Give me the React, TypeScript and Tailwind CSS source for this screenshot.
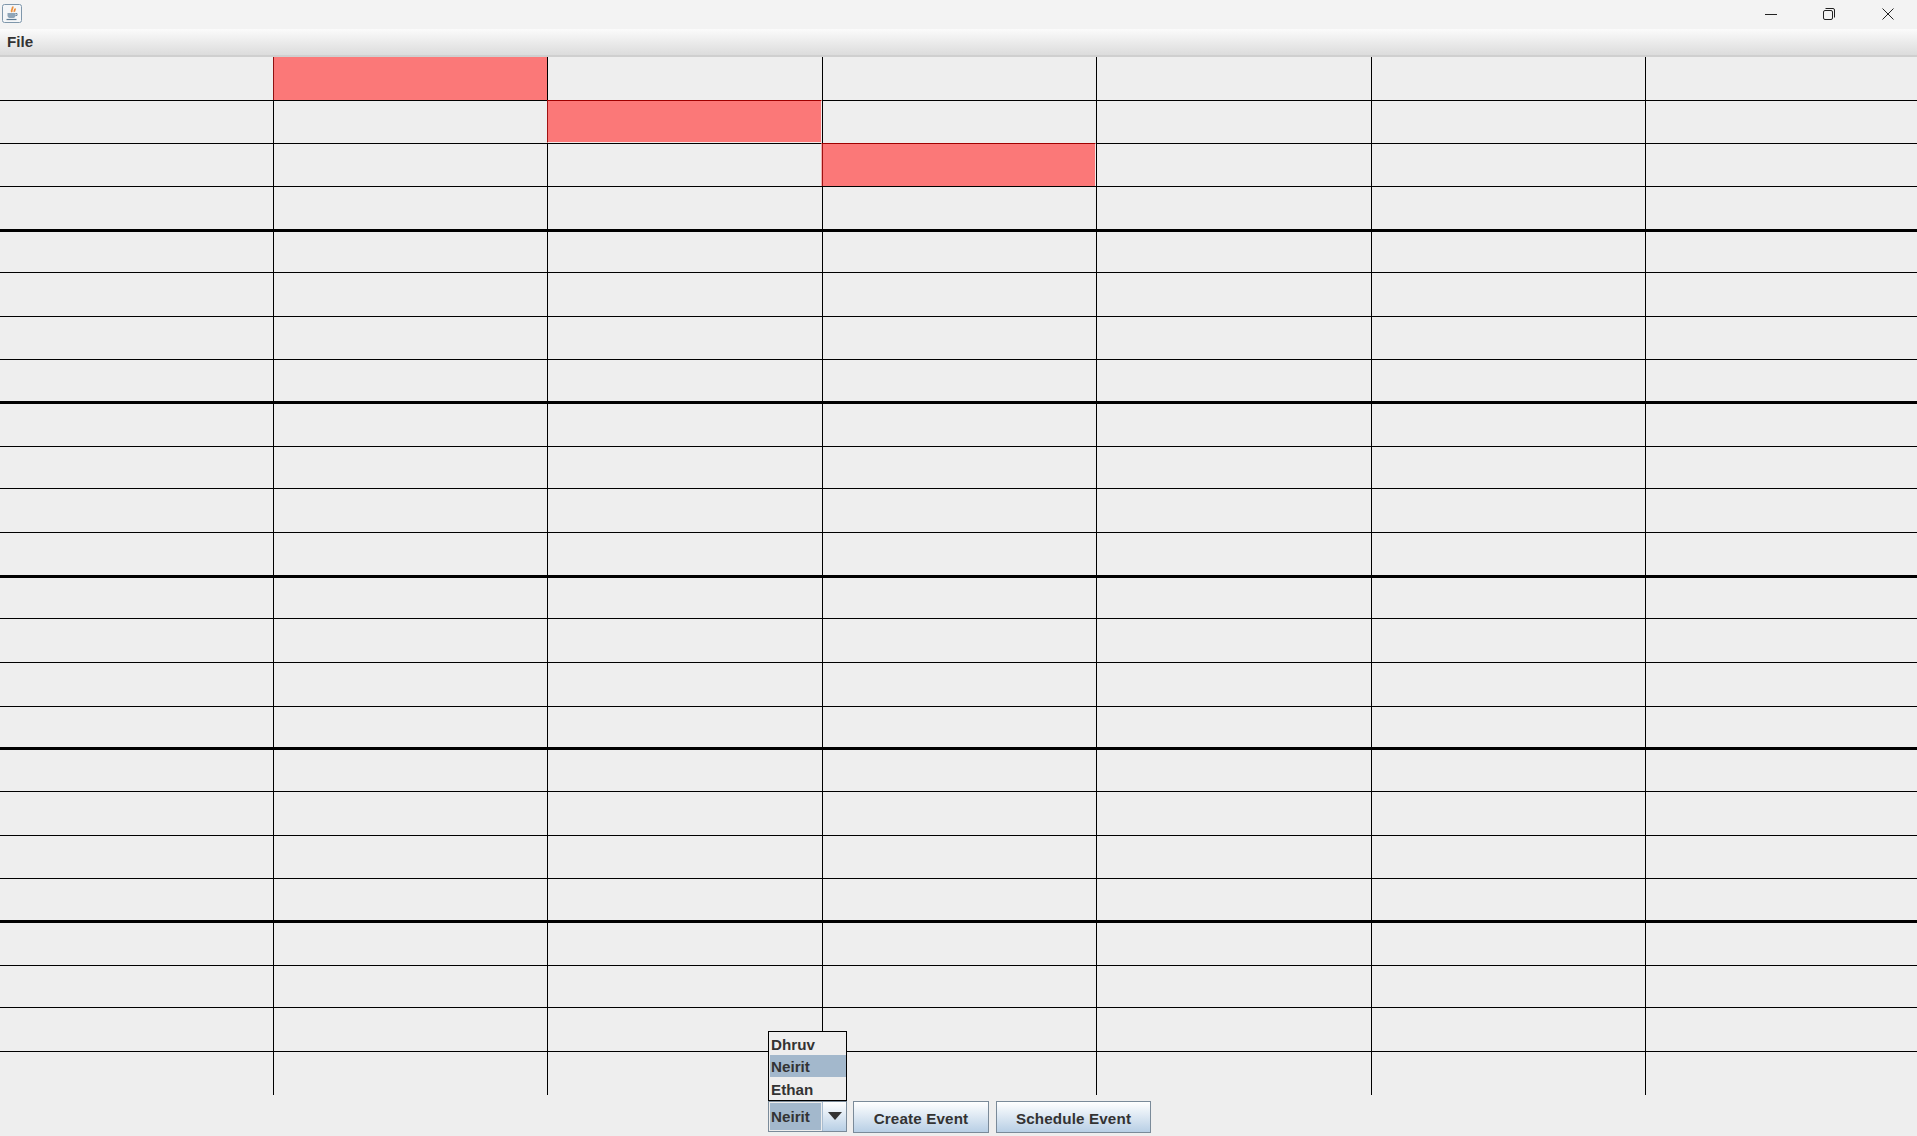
import React from 'react';

const font = "font-['Liberation_Sans',Arial,sans-serif]";
const rowCount = 24;
const colCount = 7;

// overlay for the filled slots, they paint over the grid lines on their left and top
const filled: Record<string, string> = {
  '0-1': 'absolute -left-px top-0 right-0 bottom-0 border-l border-l-[#8f1010] bg-[#fb7878]',
  '1-2': 'absolute -left-px -top-px right-0 bottom-0 border-l border-t border-l-[#a01010] border-t-[#a00000] border-r border-b border-r-[#f3eaea] border-b-[#f3eaea] bg-[#fb7878]',
  '2-3': 'absolute -left-[2px] -top-px right-0 bottom-0 border-l border-t border-r border-l-[#f0b0b0] border-t-[#a00000] border-r-[#f3eaea] bg-[#fb7878] shadow-[inset_1px_0_0_#a01010]',
};

const JavaIcon = () => (
  <svg width="20" height="20" viewBox="0 0 20 20" className="shrink-0">
    <rect x="0.5" y="0.5" width="19" height="18" rx="2" fill="#f4f6f8" stroke="#7f97ab" />
    <path d="M10.5 2.500c1.200 1.800-2 3-.5 5.500M13 4.500c.5 1.200-1.200 1.800-.5 3.300" stroke="#ec8f3c" strokeWidth="1.800" fill="none" />
    <path d="M5.500 9h8v2.500c0 1.500-1 2.500-2 2.500h-4c-1 0-2-1-2-2.500z" fill="#8fa5b8" />
    <path d="M13.500 9.500h1.500v2h-1.500" stroke="#6f8aa0" fill="none" />
    <path d="M4.500 15.500h10" stroke="#5c7a92" strokeWidth="1.200" />
  </svg>
);

const TitleBar = () => (
  <div className="flex h-[29px] items-center justify-between bg-[#f3f3f3] pl-[2px]">
    <div className="-mt-[2px]">
      <JavaIcon />
    </div>
    <div className="-mt-[2px] flex">
      <div className="flex w-[58.67px] justify-center pl-px">
        <svg width="12" height="12" viewBox="0 0 12 12">
          <path d="M0 6.500h12" stroke="#222" />
        </svg>
      </div>
      <div className="flex w-[58.67px] justify-center">
        <svg width="12" height="12" viewBox="0 0 12 12" fill="none">
          <rect x="0.500" y="2.500" width="9" height="9" rx="1.500" stroke="#222" />
          <path d="M2.500 .500h7.500a1.500 1.500 0 0 1 1.500 1.500v7.500" stroke="#222" />
        </svg>
      </div>
      <div className="flex w-[58.67px] justify-center">
        <svg width="12" height="12" viewBox="0 0 12 12">
          <path d="M.5.500l11 11M11.500.500l-11 11" stroke="#222" />
        </svg>
      </div>
    </div>
  </div>
);

const MenuBar = () => (
  <div className="flex h-[28px] items-center border-b-2 border-b-[#cfcfcf] bg-gradient-to-b from-[#fbfbfb] to-[#dcdcdc] pl-[7px]">
    <span className="text-[15.2px] font-bold text-[#333333]">File</span>
  </div>
);

const ScheduleGrid = () => (
  <div className="grid grid-cols-[274px_274px_275px_274px_275px_274px_271px] grid-rows-[44px_43px_43px_45px_41px_44px_43px_44px_43px_42px_44px_45px_41px_44px_44px_43px_42px_44px_43px_44px_43px_42px_44px_43px]">
    {Array.from({ length: rowCount }).map((_, row) =>
      Array.from({ length: colCount }).map((_, col) => {
        const thick = row % 4 === 3 && row !== rowCount - 1;
        const last = row === rowCount - 1;
        const overlay = filled[`${row}-${col}`];
        return (
          <div
            key={`${row}-${col}`}
            className={`relative border-black ${col < colCount - 1 ? 'border-r' : ''} ${
              last ? '' : thick ? 'border-b-[3px]' : 'border-b'
            }`}
          >
            {overlay && <div className={overlay} />}
          </div>
        );
      }),
    )}
  </div>
);

const Combo = () => (
  <div className="relative flex h-[31px] w-[79px] border border-[#7a8a99] bg-[#eeeeee] text-[15.2px] font-bold text-[#333333]">
    <div className="absolute bottom-full -left-px mb-px flex h-[70px] w-[79px] flex-col border border-black bg-[#eeeeee]">
      <div className="flex h-[23px] items-center pl-[2px] pt-[3px]">Dhruv</div>
      <div className="ml-px flex h-[22px] items-center bg-[#a3b8cc] pl-px pt-[2px]">Neirit</div>
      <div className="flex h-[23px] items-center pl-[2px] pt-[3px]">Ethan</div>
    </div>
    <div className="m-px flex w-[51px] items-center bg-[#a3b8cc] pl-px pt-px">Neirit</div>
    <div className="flex flex-1 items-center justify-center border-l border-l-[#a9bccf] bg-gradient-to-b from-white to-[#b8cfe5]">
      <svg width="14" height="8" viewBox="0 0 14 8" className="-mt-[2px]">
        <path d="M0 0h14L7 8z" fill="#333" />
      </svg>
    </div>
  </div>
);

const ActionButton = ({ label, width }: { label: string; width: string }) => (
  <button
    className={`flex h-[32px] ${width} items-center justify-center border border-[#7a8a99] bg-gradient-to-b from-white to-[#b8cfe5] pt-[5px] text-[15.2px] font-bold tracking-[0.15px] text-[#333333]`}
  >
    {label}
  </button>
);

const App: React.FC = () => {
  return (
    <div className={`${font} flex h-[1136px] w-[1917px] flex-col overflow-hidden bg-[#eeeeee]`}>
      <TitleBar />
      <MenuBar />
      <ScheduleGrid />
      <div className="flex flex-1 items-start justify-center pl-[2px] pt-[6px]">
        <Combo />
        <div className="ml-[6px]">
          <ActionButton label="Create Event" width="w-[136px]" />
        </div>
        <div className="ml-[7px]">
          <ActionButton label="Schedule Event" width="w-[155px]" />
        </div>
      </div>
    </div>
  );
};

export default App;
